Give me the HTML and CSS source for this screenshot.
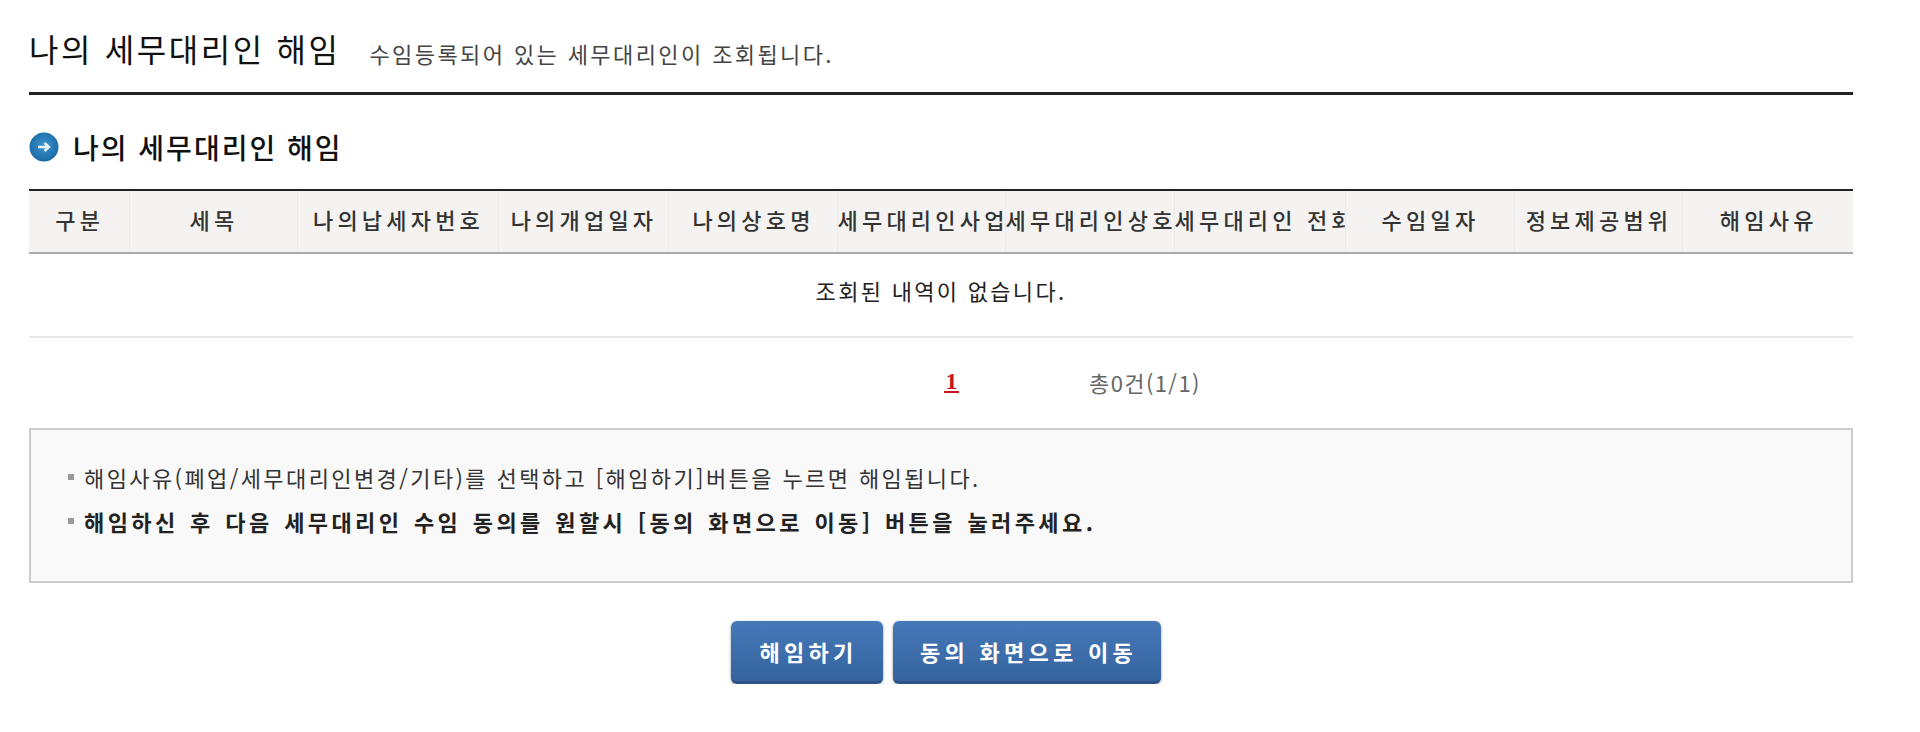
FILE: index.html
```html
<!DOCTYPE html>
<html lang="ko">
<head>
  <meta charset="UTF-8">
  <title>나의 세무대리인 해임</title>
  <link rel="stylesheet" href="styles.css">
</head>
<body>
  <div class="page">
    <header class="title-bar">
      <h1>나의 세무대리인 해임</h1>
      <span class="title-desc">수임등록되어 있는 세무대리인이 조회됩니다.</span>
    </header>

    <h2 class="section-title">
      <svg class="section-icon" viewBox="0 0 30 30" aria-hidden="true">
        <defs>
          <radialGradient id="iconFill" cx="50%" cy="45%" r="55%">
            <stop offset="0%" stop-color="#3f95cf"/>
            <stop offset="100%" stop-color="#1a6aa6"/>
          </radialGradient>
        </defs>
        <circle cx="15" cy="15" r="14.5" fill="url(#iconFill)"/>
        <path d="M9 15h10M15.5 11l4.5 4-4.5 4" fill="none" stroke="#e8f2f9" stroke-width="2.4"/>
      </svg>
      나의 세무대리인 해임
    </h2>

    <table class="list-table">
      <thead>
        <tr>
          <th><div>구분</div></th>
          <th><div>세목</div></th>
          <th><div>나의납세자번호</div></th>
          <th><div>나의개업일자</div></th>
          <th><div>나의상호명</div></th>
          <th class="clip"><div>세무대리인사업자번호</div></th>
          <th class="clip"><div>세무대리인상호</div></th>
          <th class="clip"><div>세무대리인 전화번호</div></th>
          <th><div>수임일자</div></th>
          <th><div>정보제공범위</div></th>
          <th><div>해임사유</div></th>
        </tr>
      </thead>
      <tbody>
        <tr>
          <td colspan="11">조회된 내역이 없습니다.</td>
        </tr>
      </tbody>
    </table>

    <div class="paging">
      <a class="page-num" href="#">1</a>
      <span class="page-total">총0건(1/1)</span>
    </div>

    <ul class="notice-box">
      <li>해임사유(폐업/세무대리인변경/기타)를 선택하고 [해임하기]버튼을 누르면 해임됩니다.</li>
      <li class="strong">해임하신 후 다음 세무대리인 수임 동의를 원할시 [동의 화면으로 이동] 버튼을 눌러주세요.</li>
    </ul>

    <div class="btn-area">
      <button class="btn btn-first">해임하기</button>
      <button class="btn btn-second">동의 화면으로 이동</button>
    </div>
  </div>
</body>
</html>
```

FILE: styles.css
```css
* {
  box-sizing: border-box;
}

body {
  margin: 0;
  background: #fff;
  color: #222;
  font-family: "Noto Sans CJK KR", "Noto Sans", sans-serif;
}

.page {
  width: 1824px;
  margin-left: 29px;
}

.title-bar {
  display: flex;
  align-items: flex-start;
  height: 95px;
  padding-top: 25px;
  border-bottom: 3px solid #222;
}

.title-bar h1 {
  margin: 0;
  font-size: 32px;
  line-height: 46px;
  font-weight: 400;
  letter-spacing: 2.6px;
  color: #111;
}

.title-desc {
  margin: 12px 0 0 29px;
  font-size: 22px;
  line-height: 32px;
  letter-spacing: 2.4px;
  color: #444;
}

.section-title {
  display: flex;
  align-items: center;
  height: 94px;
  margin: 0;
  padding-top: 10px;
  font-size: 28px;
  font-weight: 500;
  letter-spacing: 2px;
  color: #111;
}

.section-icon {
  width: 30px;
  height: 30px;
  margin-right: 14px;
}

.list-table {
  width: 100%;
  table-layout: fixed;
  border-collapse: collapse;
}

.list-table th {
  width: 169px;
  height: 63px;
  padding: 0 0 5px;
  background: #f4f3f1;
  border-top: 2px solid #222;
  border-bottom: 2px solid #aaa;
  border-left: 1px solid #ebebe9;
  font-size: 22px;
  font-weight: 500;
  letter-spacing: 4.2px;
  color: #333;
}

.list-table th:nth-child(1) {
  width: 100px;
  border-left: 0;
}

.list-table th:nth-child(2),
.list-table th:nth-child(6),
.list-table th:nth-child(10) {
  width: 168px;
}

.list-table th:nth-child(3) {
  width: 201px;
}

.list-table th:nth-child(4) {
  width: 170px;
}

.list-table th:nth-child(8) {
  width: 171px;
}

.list-table th:nth-child(11) {
  width: auto;
}

.list-table th div {
  overflow: hidden;
  padding-left: 2px;
  white-space: nowrap;
  text-align: center;
}

.list-table th.clip div {
  padding-left: 0;
}

.list-table td {
  height: 84px;
  padding: 0 0 10px;
  border-bottom: 2px solid #e8e8e8;
  text-align: center;
  font-size: 22px;
  letter-spacing: 2.3px;
  color: #222;
}

.paging {
  display: flex;
  align-items: center;
  height: 90px;
  padding: 0 0 2px 915px;
}

.page-num {
  width: 15px;
  border-bottom: 2px solid #c8161d;
  font-family: "Liberation Serif", serif;
  font-size: 24px;
  line-height: 20px;
  font-weight: 700;
  text-align: center;
  text-decoration: none;
  color: #c8161d;
}

.page-total {
  margin-left: 130px;
  font-size: 22px;
  letter-spacing: 1.4px;
  color: #666;
}

.notice-box {
  height: 155px;
  margin: 0;
  padding: 25px 0 0 37px;
  list-style: none;
  background: #f9f9f9;
  border: 2px solid #ccc;
}

.notice-box li {
  display: flex;
  align-items: center;
  height: 44px;
  font-size: 22px;
  letter-spacing: 2.4px;
  color: #333;
}

.notice-box li::before {
  content: "";
  width: 6px;
  height: 6px;
  margin-right: 10px;
  background: #999;
}

.notice-box .strong {
  font-weight: 700;
  letter-spacing: 3.4px;
  word-spacing: 2px;
  color: #222;
}

.btn-area {
  display: flex;
  justify-content: center;
  gap: 10px;
  margin-top: 38px;
  padding-left: 9px;
}

.btn {
  height: 63px;
  padding: 0 0 0 4px;
  border: 0;
  border-bottom: 3px solid #2b5287;
  border-radius: 6px;
  background: linear-gradient(#4679b8, #35649f);
  box-shadow: 0 1px 3px rgba(0, 0, 0, 0.4);
  color: #fff;
  font-family: inherit;
  font-size: 22px;
  font-weight: 700;
  letter-spacing: 4.3px;
}

.btn-first {
  width: 152px;
}

.btn-second {
  width: 268px;
}
```
